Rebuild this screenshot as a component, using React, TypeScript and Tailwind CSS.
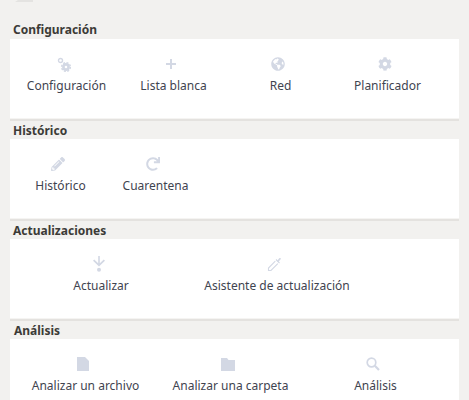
import type { ReactNode } from "react";
import { FaCog, FaGlobeAmericas, FaPencilAlt, FaRedo } from "react-icons/fa";

type Item = { label: string; icon: ReactNode };

const iconClass = "text-[#d3d8e4]";

const CogsIcon = () => (
  <svg width="14" height="15" viewBox="0 0 14 15" className={iconClass}>
    <g fill="none" stroke="currentColor">
      <circle cx="3.5" cy="3.5" r="2" strokeWidth="1.4" />
      <circle cx="9" cy="10" r="2.6" strokeWidth="2.6" />
      <circle cx="9" cy="10" r="4.4" strokeWidth="1.4" strokeDasharray="2 1.45" />
    </g>
  </svg>
);

const PlusIcon = () => (
  <svg width="10" height="10" viewBox="0 0 10 10" className={iconClass}>
    <path d="M4 0h2v4h4v2H6v4H4V6H0V4h4z" fill="currentColor" />
  </svg>
);

const DownIcon = () => (
  <svg width="12" height="16" viewBox="0 0 12 16" className={iconClass}>
    <path d="M5.2 0h1.6v7.2L10.8 3.6 12 4.8 6 10.4 0 4.8l1.2-1.2 4 3.6z" fill="currentColor" />
    <circle cx="6" cy="13.8" r="2" fill="currentColor" />
  </svg>
);

const DropperIcon = () => (
  <svg width="15" height="15" viewBox="0 0 15 15" className={iconClass}>
    <path d="M9 2.5l3.5 3.5M8.3 4.2L1.5 11v2.5H4l6.8-6.8" fill="none" stroke="currentColor" strokeWidth="1.1" />
    <path d="M10 4l2-2.6c.8-.8 2-.4 1.9.7L11.3 5z" fill="currentColor" />
  </svg>
);

const FileIcon = () => (
  <svg width="12" height="14" viewBox="0 0 12 14" className={iconClass}>
    <path d="M0 0h8l4 4v10H0z" fill="currentColor" />
  </svg>
);

const FolderIcon = () => (
  <svg width="14" height="13" viewBox="0 0 14 13" className={iconClass}>
    <path d="M0 0h6l1.5 2H14v11H0z" fill="currentColor" />
  </svg>
);

const SearchIcon = () => (
  <svg width="14" height="14" viewBox="0 0 14 14" className={iconClass}>
    <circle cx="5.5" cy="5.5" r="4.3" fill="none" stroke="currentColor" strokeWidth="1.7" />
    <path d="M8.8 8.8L13 13" stroke="currentColor" strokeWidth="2.2" />
  </svg>
);

const Item = ({ label, icon, width }: Item & { width: string }) => (
  <div className={`${width} flex flex-col items-center`}>
    <div className="flex h-[16px] items-center justify-center pr-[5px]">{icon}</div>
    <span className="mt-[6px] text-[12px] leading-[16px] text-[#3f4450]">{label}</span>
  </div>
);

const Section = ({ title, items, width, titleClass = "ml-[3px] pt-[1px]" }: { title: string; items: Item[]; width: string; titleClass?: string }) => (
  <section>
    <h2 className={`${titleClass} h-[18px] text-[12px] font-bold leading-[18px] text-[#3c3b37]`}>{title}</h2>
    <div className="h-[79px] bg-white pl-[3px] pt-[17px]">
      <div className="flex">
        {items.map((item) => (
          <Item key={item.label} width={width} {...item} />
        ))}
      </div>
    </div>
    <div className="h-[1px] bg-[#f5f4f2]" />
    <div className="h-[2px] bg-[#e4e2df]" />
  </section>
);

const App = () => (
  <div className="h-[400px] overflow-hidden bg-[#f2f1ef] px-[10px] font-['Noto_Sans',sans-serif]">
    <svg width="18" height="3" viewBox="0 0 18 3" className="ml-[5px] block text-[#d5d5d3]">
      <path d="M0 1.5L3 .5h15v1H3z" fill="currentColor" />
    </svg>
    <div className="pt-[18px]">
      <Section
        title="Configuración"
        titleClass="ml-[3px]"
        width="w-[107px]"
        items={[
          { label: "Configuración", icon: <CogsIcon /> },
          { label: "Lista blanca", icon: <PlusIcon /> },
          { label: "Red", icon: <FaGlobeAmericas size={14} className={iconClass} /> },
          { label: "Planificador", icon: <FaCog size={14} className={iconClass} /> },
        ]}
      />
      <Section
        title="Histórico"
        width="w-[95px]"
        items={[
          { label: "Histórico", icon: <FaPencilAlt size={14} className={iconClass} /> },
          { label: "Cuarentena", icon: <FaRedo size={14} className={iconClass} /> },
        ]}
      />
      <Section
        title="Actualizaciones"
        width="w-[176px]"
        items={[
          { label: "Actualizar", icon: <DownIcon /> },
          { label: "Asistente de actualización", icon: <DropperIcon /> },
        ]}
      />
      <Section
        title="Análisis"
        titleClass="ml-[4px] pt-[1px]"
        width="w-[145px]"
        items={[
          { label: "Analizar un archivo", icon: <FileIcon /> },
          { label: "Analizar una carpeta", icon: <FolderIcon /> },
          { label: "Análisis", icon: <SearchIcon /> },
        ]}
      />
    </div>
  </div>
);

export default App;
